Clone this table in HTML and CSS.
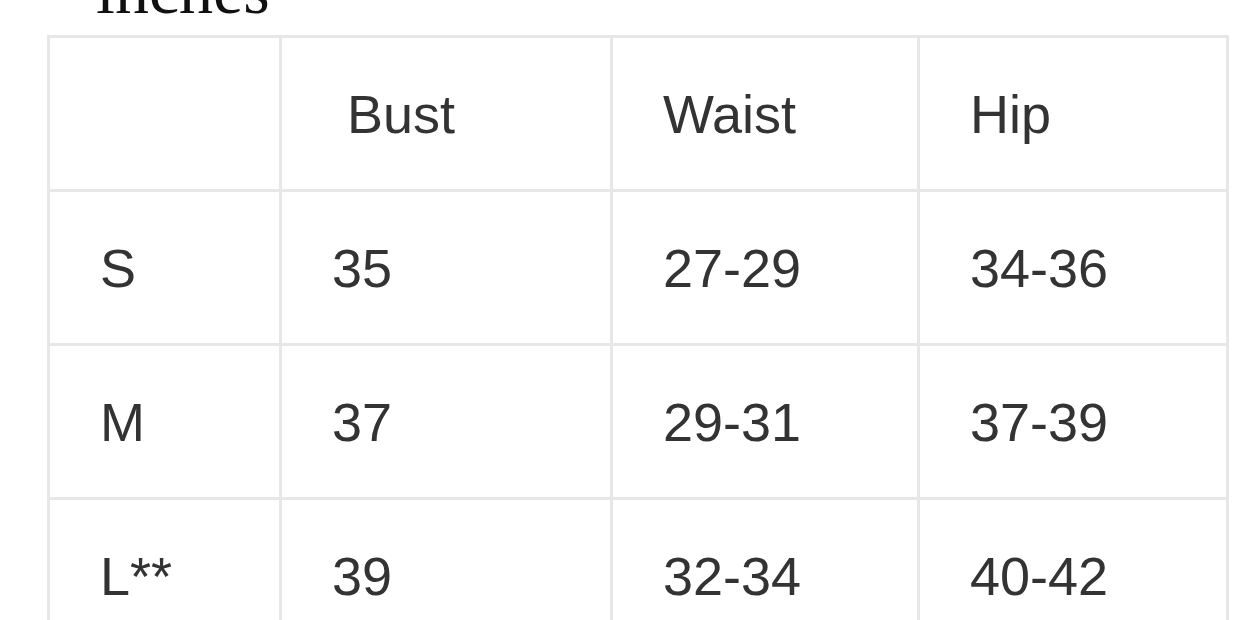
FILE: index.html
```html
<!DOCTYPE html>
<html>
<head>
<meta charset="utf-8">
<link rel="stylesheet" href="styles.css">
</head>
<body>
<h2 class="unit">inches</h2>
<table class="sizes">
  <colgroup>
    <col class="c1"><col class="c2"><col class="c3"><col class="c4">
  </colgroup>
  <tr><td></td><td>&nbsp;Bust</td><td>Waist</td><td>Hip</td></tr>
  <tr><td>S</td><td>35</td><td>27-29</td><td>34-36</td></tr>
  <tr><td>M</td><td>37</td><td>29-31</td><td>37-39</td></tr>
  <tr><td>L**</td><td>39</td><td>32-34</td><td>40-42</td></tr>
</table>
</body>
</html>
```
FILE: styles.css
```css
html, body {
  margin: 0;
  padding: 0;
  background: #ffffff;
}
body {
  overflow: hidden;
}
.unit {
  margin: -44px 0 0 0;
  padding-left: 96px;
  font-family: "Liberation Serif", serif;
  font-weight: normal;
  font-size: 68px;
  line-height: 68px;
  color: #111;
  height: 79px;
}
.sizes {
  margin-left: 47px;
  border-collapse: collapse;
  table-layout: fixed;
  width: 1181px;
  font-family: "Liberation Sans", Arial, sans-serif;
  font-size: 54px;
  color: #333;
}
.c1 { width: 232px; }
.c2 { width: 331px; }
.c3 { width: 307px; }
.c4 { width: 309px; }
.sizes td {
  border: 3px solid #e7e7e7;
  height: 154px;
  padding: 0 0 0 50px;
  vertical-align: middle;
  box-sizing: border-box;
}
```
